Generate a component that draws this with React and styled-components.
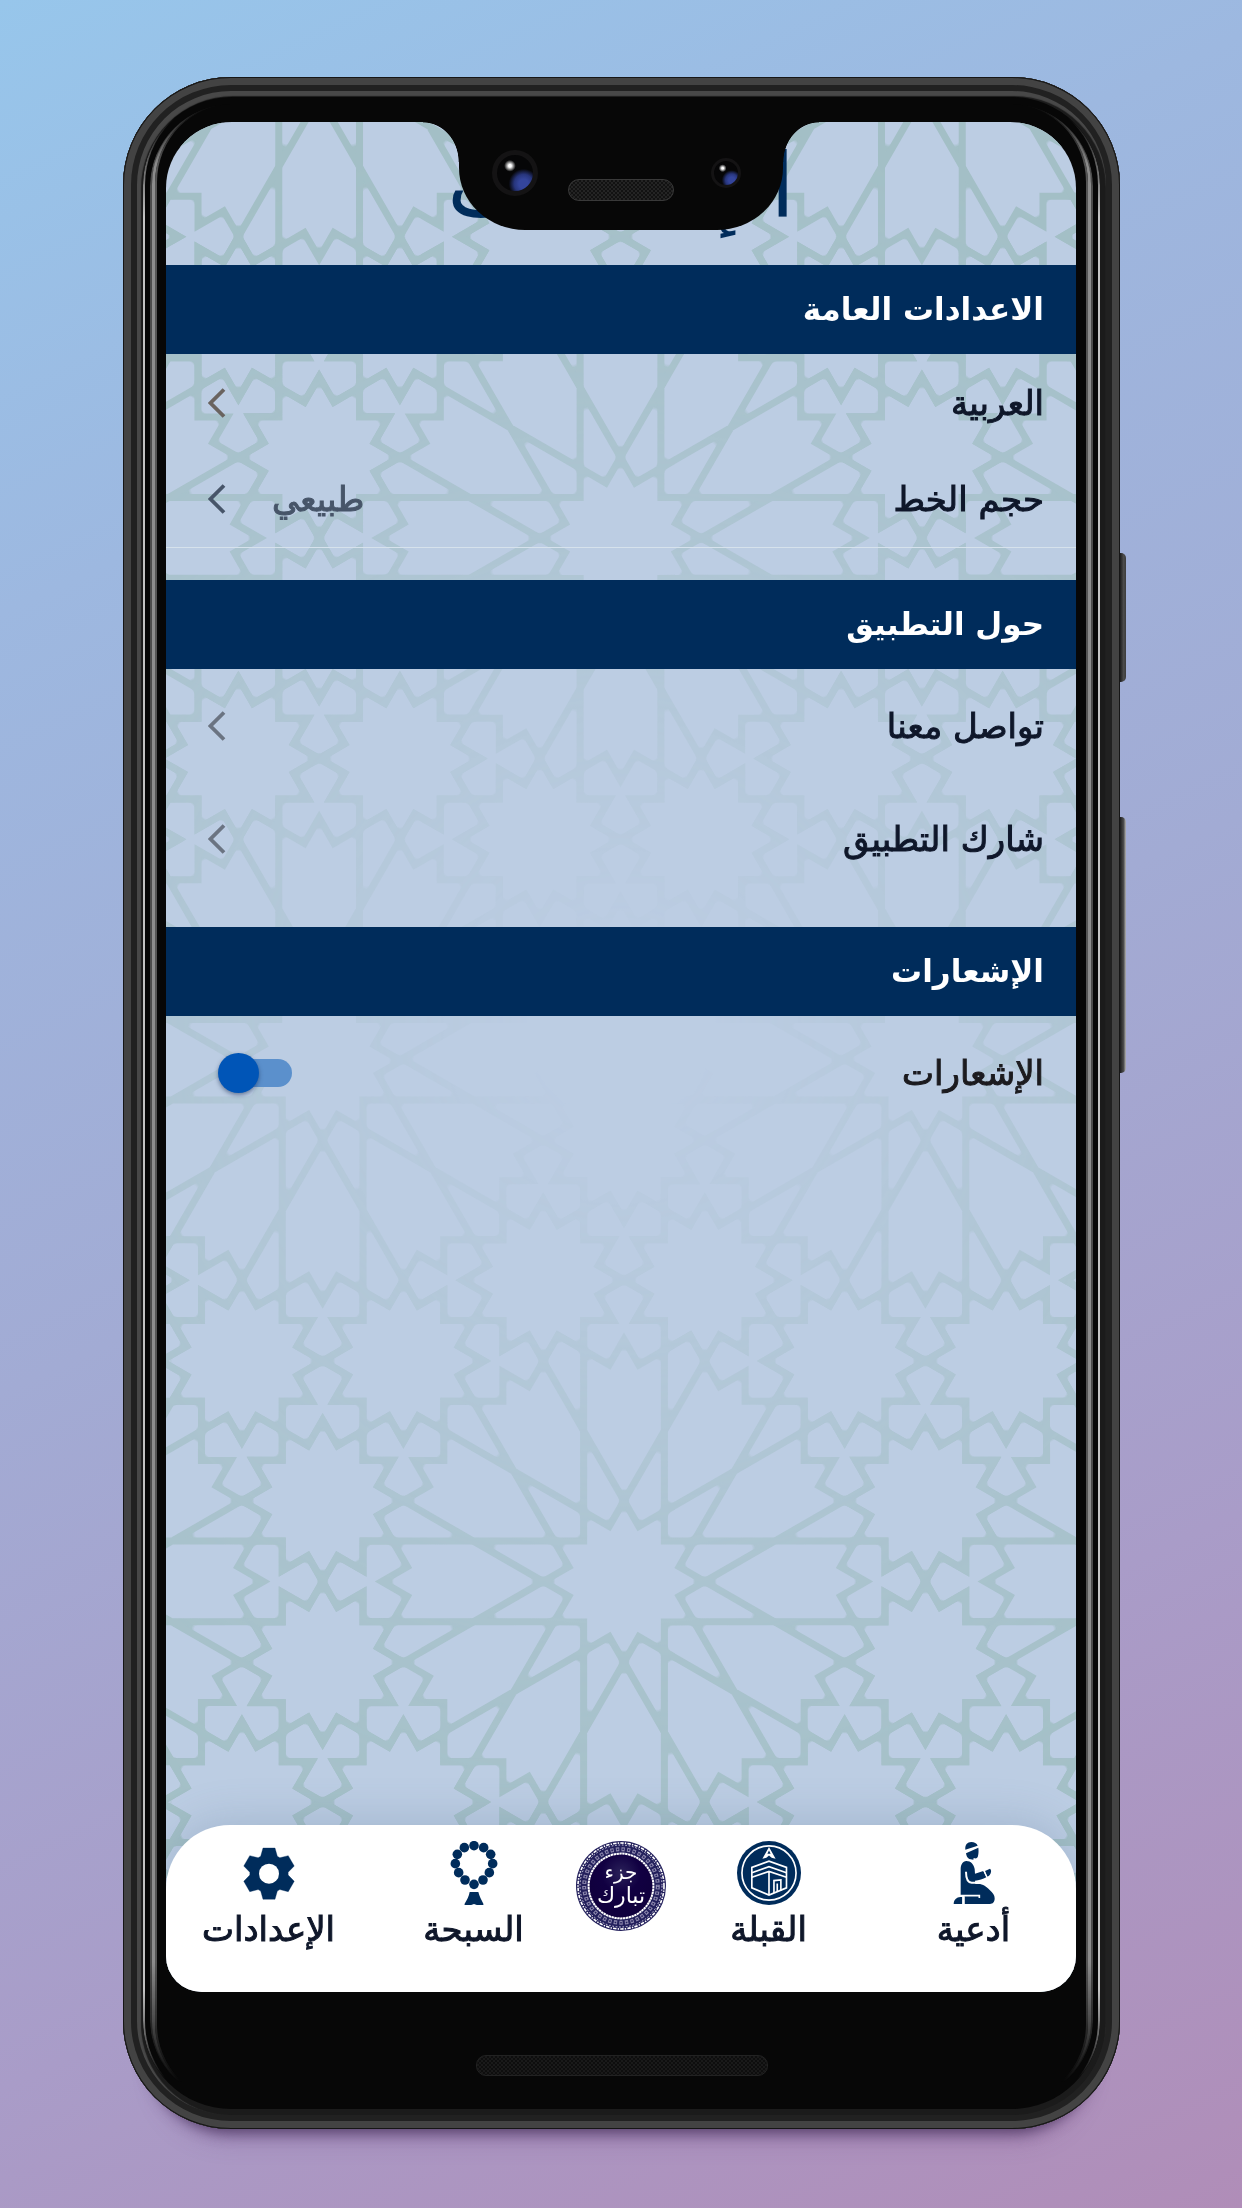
import React from "react";
import styled, { createGlobalStyle } from "styled-components";

const navy = "#002c5b";
const ink = "#0f172a";
const arabic = '"DejaVu Sans", "Noto Sans", sans-serif';

const GlobalStyle = createGlobalStyle`
  *, *::before, *::after { box-sizing: border-box; }
  html { background: #a69fcc; }
  body { margin: 0; font-family: ${arabic}; color: ${ink}; }
  button, input { font: inherit; margin: 0; }
`;

const Stage = styled.div`
  display: flex;
  min-height: 100vh;
  padding: 77px 122px 79px 123px;
  background: linear-gradient(155deg, #97c6eb 0%, #9db8e0 22%, #a2abd4 50%, #a99cc8 75%, #b08db8 100%);
`;

const Phone = styled.div`
  position: relative;
  flex: 1;
  display: flex;
  padding: 45px 44px 137px 43px;
  border-radius: 108px;
  background: #070707;
  box-shadow:
    inset 0 0 0 1px #161616,
    inset 0 0 0 8px #434343,
    inset 0 0 0 14px #212121,
    inset 2px 3px 1px 16px #484848,
    inset 0 0 0 20px #1b1b1b,
    0 28px 14px -24px rgba(60, 40, 80, 0.7),
    0 44px 26px -36px rgba(110, 70, 130, 0.4);
`;

const Edge = styled.i`
  position: absolute;
  inset: 20px;
  border: 0 solid #c4c4c4;
  border-width: 0 2px;
  border-radius: 88px;
  pointer-events: none;
  mask-image: linear-gradient(transparent 20px, #000 120px, #000 calc(100% - 120px), transparent calc(100% - 30px));
`;

const Gloss = styled.i`
  position: absolute;
  inset: 27px;
  border: 0 solid #4c4c4c;
  border-width: 0 2px;
  border-radius: 82px;
  pointer-events: none;
  mask-image: linear-gradient(transparent, #000 60px, #000 calc(100% - 140px), transparent calc(100% - 20px));
  &::before, &::after {
    content: "";
    position: absolute;
    inset: 0;
    border: 0 solid #8c8c8c;
    border-width: 0 3px;
    border-radius: 80px;
  }
  &::after {
    inset: 0 3px;
    border-color: #555;
    border-width: 0 2px;
    border-radius: 78px;
  }
`;

const SideKey = styled.i`
  position: absolute;
  left: 100%;
  top: ${(p) => p.$top}px;
  width: 6px;
  height: ${(p) => p.$height}px;
  border-radius: 0 5px 5px 0;
  background: linear-gradient(90deg, #1c1c1c, #4c4c4c 60%, ${(p) => (p.$bright ? "#b5b5b5" : "#3c3c3c")});
`;

const Chin = styled.i`
  position: absolute;
  left: 50%;
  bottom: 53px;
  width: 292px;
  height: 21px;
  transform: translateX(-50%);
  border: 1px solid #222;
  border-radius: 10px;
  background: repeating-conic-gradient(#0e0e0e 0 25%, #1a1a1a 0 50%) 0 0 / 4px 4px;
`;

const Screen = styled.main`
  position: relative;
  flex: 1;
  display: flex;
  flex-direction: column;
  overflow: hidden;
  border-radius: 66px 66px 36px 36px;
  background: #bccde3;
`;

const Wallpaper = styled.svg`
  position: absolute;
  inset: 0;
  width: 100%;
  height: 100%;
`;

const Notch = styled.div`
  position: absolute;
  z-index: 2;
  top: 0;
  left: 50%;
  width: 324px;
  height: 108px;
  transform: translateX(-50%);
  border-radius: 0 0 66px 66px / 0 0 62px 62px;
  background: #070707;
  &::before, &::after {
    content: "";
    position: absolute;
    top: 0;
    width: 36px;
    height: 40px;
    background: radial-gradient(ellipse 36px 40px at 0 100%, transparent 98%, #070707 100%);
    right: 100%;
  }
  &::after {
    right: auto;
    left: 100%;
    background: radial-gradient(ellipse 36px 40px at 100% 100%, transparent 98%, #070707 100%);
  }
`;

const NotchParts = styled.div`
  display: flex;
  align-items: center;
  direction: ltr;
  height: 102px;
  padding: 0 42px 0 33px;
`;

const Lens = styled.i`
  width: ${(p) => p.$size}px;
  height: ${(p) => p.$size}px;
  border: ${(p) => p.$rim}px solid #141314;
  border-radius: 50%;
  background:
    radial-gradient(circle at 36% 30%, #fff 0 4%, transparent 17%),
    radial-gradient(circle at 74% 80%, #34459c 0 12%, #27357c 24%, transparent 38%),
    #060607;
`;

const Earpiece = styled.i`
  width: 106px;
  height: 22px;
  margin: 34px 37px 0 30px;
  border: 1px solid #393939;
  border-radius: 11px;
  background: repeating-conic-gradient(#121212 0 25%, #242424 0 50%) 0 0 / 4px 4px;
`;

const Title = styled.h1`
  position: relative;
  height: 143px;
  margin: 0;
  text-align: center;
  font-size: 89px;
  line-height: 128px;
  font-weight: 400;
  color: ${navy};
`;

const Section = styled.section`
  position: relative;
  padding-bottom: ${(p) => (p.$last ? 0 : 32)}px;
`;

const SectionTitle = styled.h2`
  margin: 0;
  padding: 0 32px;
  background: ${navy};
  color: #fff;
  font-size: 31px;
  line-height: 89px;
  font-weight: 700;
`;

const Row = styled.button`
  display: flex;
  align-items: center;
  gap: 46px;
  width: 100%;
  height: ${(p) => (p.$compact ? 97 : 113)}px;
  padding: 0 32px 0 42px;
  border: 0;
  border-bottom: ${(p) => (p.$ruled ? "1px solid #d6e2ec" : "0")};
  background: none;
  color: ${ink};
  font-size: 34px;
  text-align: start;
  -webkit-text-stroke: 1px currentColor;
  cursor: pointer;
`;

const RowLabel = styled.span`
  flex: 1;
`;

const RowValue = styled.span`
  color: #475569;
`;

const SwitchRow = styled(Row).attrs({ as: "label" })`
  padding-left: 52px;
  color: #1c1b1f;
`;

const Switch = styled.input`
  appearance: none;
  position: relative;
  width: 74px;
  height: 40px;
  cursor: pointer;
  &::before, &::after {
    content: "";
    position: absolute;
  }
  &::before {
    inset: 6px 0 6px 4px;
    border-radius: 14px;
    background: #5b90cc;
  }
  &::after {
    left: 0;
    top: 0;
    width: 41px;
    height: 40px;
    border-radius: 50%;
    background: #0055b7;
    box-shadow: 0 2px 4px rgba(20, 40, 80, 0.5);
  }
  &:not(:checked)::after {
    left: 33px;
    background: #eef2f8;
  }
`;

const TabBar = styled.nav`
  position: relative;
  display: grid;
  grid-template-columns: 1fr 1fr 90px 1fr 1fr;
  height: 167px;
  margin-top: auto;
  padding-top: 16px;
  border-radius: 64px 64px 0 0;
  background: #fff;
  box-shadow: 0 -6px 40px rgba(80, 110, 140, 0.22);
`;

const Tab = styled.a`
  display: flex;
  flex-direction: column;
  align-items: center;
  color: ${ink};
  font-size: 34px;
  line-height: 48px;
  text-decoration: none;
  -webkit-text-stroke: 1px currentColor;
  svg { display: block; color: ${navy}; -webkit-text-stroke: 0; }
`;

/* ---- Wallpaper: twelve-fold star rosettes on a triangular lattice ---- */

const D = 161.5;
const TIP = D / 2;
const VALLEY = TIP * Math.SQRT1_2;
const PERIOD = D / Math.tan(Math.PI / 12);
const RING = D / (2 * Math.sin(Math.PI / 12));
const rad = (deg) => (deg * Math.PI) / 180;

const starPath = (cx, cy) =>
  "M" +
  Array.from({ length: 24 }, (_, i) => {
    const r = i % 2 ? VALLEY : TIP;
    return `${(cx + r * Math.cos(rad(i * 15))).toFixed(2)} ${(cy + r * Math.sin(rad(i * 15))).toFixed(2)}`;
  }).join("L") +
  "Z";

const rosettePath = () => {
  let d = starPath(0, 0);
  for (let k = 0; k < 12; k++) {
    const a = rad(k * 30);
    const turn = ([x, y]) =>
      `${(x * Math.cos(a) - y * Math.sin(a)).toFixed(2)} ${(x * Math.sin(a) + y * Math.cos(a)).toFixed(2)}`;
    const line = (pts) => "M" + pts.map(turn).join("L");
    const reach = TIP + D * Math.cos(rad(30));
    d += line([[reach, -TIP], [TIP, 0], [reach, TIP]]);
    d += line([[231.4, -40.4], [216.6, -14.8], [242.2, 0], [216.6, 14.8], [231.4, 40.4]]);
    d += starPath(RING * Math.cos(a + rad(15)), RING * Math.sin(a + rad(15)));
  }
  return d;
};

const ROSETTE = rosettePath();

const lattice = (x0, y0) => {
  const out = [];
  for (let j = -3; j <= 3; j++)
    for (let i = -2; i <= 2; i++)
      out.push([x0 + (i + (Math.abs(j) % 2) / 2) * PERIOD, y0 + j * PERIOD * Math.sin(rad(60))]);
  return out;
};

function Pattern() {
  const draw = (x0, y0) =>
    lattice(x0, y0).map(([x, y]) => <path key={`${x},${y}`} d={ROSETTE} transform={`translate(${x} ${y})`} />);
  return (
    <Wallpaper viewBox="0 0 910 1870" preserveAspectRatio="xMidYMin slice" aria-hidden="true">
      <defs>
        <radialGradient id="fade" gradientUnits="userSpaceOnUse" cx="455" cy="905" r="900">
          <stop offset="0.1" stopColor="#fff" stopOpacity="0" />
          <stop offset="0.35" stopColor="#fff" stopOpacity="0.3" />
          <stop offset="0.7" stopColor="#fff" stopOpacity="0.76" />
          <stop offset="1" stopColor="#fff" stopOpacity="1" />
        </radialGradient>
        <mask id="veil" maskUnits="userSpaceOnUse" x="0" y="0" width="910" height="1870">
          <rect width="910" height="1870" fill="url(#fade)" />
        </mask>
        <filter id="fillet" filterUnits="userSpaceOnUse" x="0" y="0" width="910" height="1870" colorInterpolationFilters="sRGB">
          <feGaussianBlur stdDeviation="4" result="soft" />
          <feComponentTransfer in="soft" result="joined">
            <feFuncA type="linear" slope="9" intercept="-4.7" />
          </feComponentTransfer>
          <feMerge>
            <feMergeNode in="joined" />
            <feMergeNode in="SourceGraphic" />
          </feMerge>
        </filter>
        <clipPath id="upper"><rect width="910" height="938" /></clipPath>
        <clipPath id="lower"><rect y="938" width="910" height="932" /></clipPath>
      </defs>
      <g mask="url(#veil)">
        <g filter="url(#fillet)" fill="none" stroke="#a3bfc6" strokeWidth="7" strokeMiterlimit="6">
          <g clipPath="url(#upper)">{draw(454.5, 416)}</g>
          <g clipPath="url(#lower)">{draw(458, 1459.5)}</g>
        </g>
      </g>
    </Wallpaper>
  );
}

/* ---- Icons ---- */

const Chevron = ({ color = "#6b7482" }) => (
  <svg width="18" height="30" viewBox="0 0 18 30" fill="none" aria-hidden="true">
    <path d="M16 1.5 2.5 15 16 28.5" stroke={color} strokeWidth="3.8" />
  </svg>
);

const PrayerIcon = () => (
  <svg width="64" height="64" viewBox="970 183 192 192" fill="currentColor" aria-hidden="true">
    <path d="M1040 209c-2-14 6-23 18-23 9 0 16 4 19 11z" />
    <path d="M1042 220 1079 203c1 8 1 17-1 25-1 6-5 8-10 7l-3-1-1 5-12-2c-6-3-9-9-10-17z" />
    <path d="M1026 345v-77c0-14 6-25 17-25 14 0 22 10 25 24l1 14 25-8 9 19c-10 6-22 9-34 10l1 10h9c14 0 25 8 34 18 9 9 15 14 15 25 0 12-6 17-14 17h-76v-27z" />
    <path d="m1099 273 15-7c6 5 3 16-4 22l-5 2z" />
    <path d="M1005 372c0-13 9-20 20-21h6v21z" />
    <path d="M1042 275c0 20 3 32 17 33h14" fill="none" stroke="#fff" strokeWidth="6" />
    <path d="M1024 347h58v7" fill="none" stroke="#fff" strokeWidth="5" />
    <path d="M1034 351v24" fill="none" stroke="#fff" strokeWidth="6" />
    <path d="m1096 272 9 20" fill="none" stroke="#fff" strokeWidth="4" />
  </svg>
);

const QiblaIcon = () => (
  <svg width="64" height="64" viewBox="529 63 194 194" fill="none" aria-hidden="true">
    <circle cx="626" cy="160" r="97" fill="currentColor" />
    <circle cx="626" cy="160" r="82" stroke="#fff" strokeWidth="5" />
    <path d="m626 81 20 36-12-3-8-7-8 7-12 3z" fill="#fff" />
    <path d="m626 92 5 10h-10z" fill="currentColor" />
    <g stroke="#fff" strokeWidth="5">
      <path d="M574 143v62l52 22 53-22v-62l-53-19z" />
      <path d="m574 159 52-18 53 18M574 173l52-18 53 18M626 153v74" />
      <path d="M641 221v-38l21-2v33M651 216v-24" />
    </g>
  </svg>
);

const beads = [[0, -54], [29, -48], [50, -28], [56, 0], [46, 27], [27, 49], [0, 62], [-27, 49], [-46, 27], [-56, 0], [-50, -28], [-29, -48]];

const RosaryIcon = () => (
  <svg width="64" height="64" viewBox="-96 -68 192 192" fill="currentColor" aria-hidden="true">
    {beads.map(([x, y]) => <circle key={`${x},${y}`} cx={x} cy={y} r="14.4" />)}
    <path d="M-13 85h26c3 13 9 23 15 35 1 4-1 6-4 6h-10L0 121l-14 5h-10c-4 0-5-2-4-6 7-12 13-22 15-35z" />
  </svg>
);

const gearPoints = Array.from({ length: 6 }, (_, k) =>
  [[-25, -52], [-18, -77], [18, -77], [25, -52]].map(([x, y]) => {
    const a = rad(k * 60);
    return `${(x * Math.cos(a) - y * Math.sin(a)).toFixed(1)},${(x * Math.sin(a) + y * Math.cos(a)).toFixed(1)}`;
  }).join(" ")
).join(" ");

const GearIcon = () => (
  <svg width="64" height="64" viewBox="-96 -98 192 192" aria-hidden="true">
    <polygon points={gearPoints} fill="currentColor" stroke="currentColor" strokeWidth="1" strokeLinejoin="round" />
    <circle r="30" fill="#fff" />
  </svg>
);

const Seal = () => (
  <svg width="90" height="90" viewBox="-45 -45 90 90" role="img" aria-label="جزء تبارك">
    <defs>
      <radialGradient id="seal" cx="0.5" cy="0.3">
        <stop offset="0" stopColor="#2a2159" />
        <stop offset="0.6" stopColor="#110042" />
        <stop offset="1" stopColor="#10003e" />
      </radialGradient>
    </defs>
    <circle r="45" fill="#23205c" />
    <circle r="43" fill="none" stroke="#fff" strokeWidth="1.6" strokeDasharray="3.4 1.2 1.4 1.2" />
    <circle r="41" fill="none" stroke="#dcdaea" strokeWidth="1" strokeDasharray="1.6 1.8" />
    <circle r="36.8" fill="none" stroke="#8d88ad" strokeWidth="4" strokeDasharray="3.4 2.2" />
    <circle r="36.8" fill="none" stroke="#23205c" strokeWidth="1.6" strokeDasharray="1.6 4" strokeDashoffset="-0.9" />
    <circle r="32.4" fill="url(#seal)" stroke="#fff" strokeWidth="2" strokeDasharray="2.4 0.5" />
    <g fill="#fff" fontFamily={arabic} textAnchor="middle" direction="rtl">
      <text y="-7" fontSize="20">جزء</text>
      <text y="17" fontSize="22">تبارك</text>
    </g>
  </svg>
);

export default function App() {
  return (
    <>
      <GlobalStyle />
      <Stage dir="rtl" lang="ar">
        <Phone>
          <Edge />
          <Gloss />
          <SideKey $top={476} $height={129} />
          <SideKey $top={740} $height={256} $bright />
          <Screen>
            <Pattern />
            <Notch>
              <NotchParts>
                <Lens $size={46} $rim={5} />
                <Earpiece />
                <Lens $size={30} $rim={3} />
              </NotchParts>
            </Notch>
            <Title>الإعدادات</Title>
            <Section>
              <SectionTitle>الاعدادات العامة</SectionTitle>
              <Row type="button" $compact>
                <RowLabel>العربية</RowLabel>
                <Chevron color="#69635f" />
              </Row>
              <Row type="button" $compact $ruled>
                <RowLabel>حجم الخط</RowLabel>
                <RowValue>طبيعي</RowValue>
                <Chevron color="#475569" />
              </Row>
            </Section>
            <Section>
              <SectionTitle>حول التطبيق</SectionTitle>
              <Row type="button">
                <RowLabel>تواصل معنا</RowLabel>
                <Chevron />
              </Row>
              <Row type="button">
                <RowLabel>شارك التطبيق</RowLabel>
                <Chevron />
              </Row>
            </Section>
            <Section $last>
              <SectionTitle>الإشعارات</SectionTitle>
              <SwitchRow htmlFor="notifications">
                <RowLabel>الإشعارات</RowLabel>
                <Switch id="notifications" type="checkbox" defaultChecked />
              </SwitchRow>
            </Section>
            <TabBar>
              <Tab href="#duas"><PrayerIcon />أدعية</Tab>
              <Tab href="#qibla"><QiblaIcon />القبلة</Tab>
              <Tab href="#home"><Seal /></Tab>
              <Tab href="#rosary"><RosaryIcon />السبحة</Tab>
              <Tab href="#settings"><GearIcon />الإعدادات</Tab>
            </TabBar>
          </Screen>
          <Chin />
        </Phone>
      </Stage>
    </>
  );
}
